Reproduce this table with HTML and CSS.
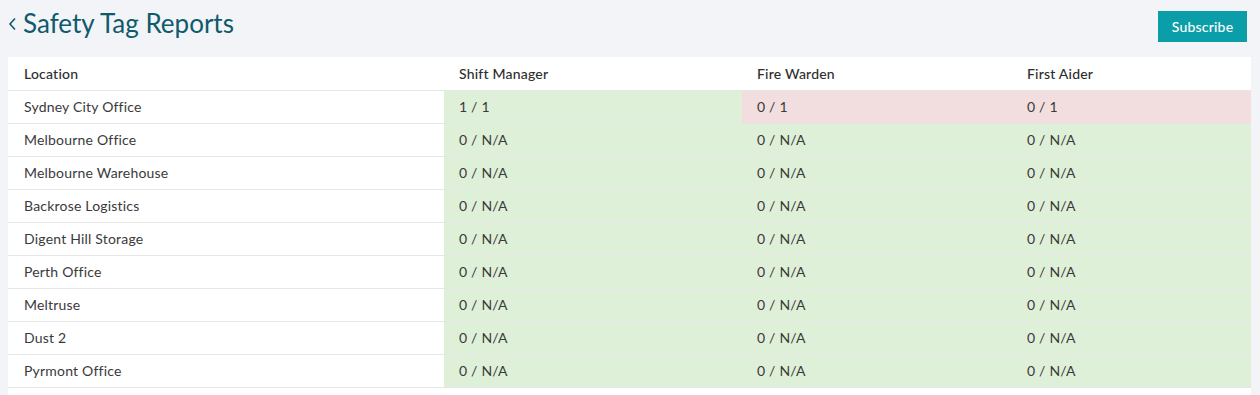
FILE: index.html
```html
<!DOCTYPE html>
<html lang="en">
<head>
<meta charset="utf-8">
<title>Safety Tag Reports</title>
<link rel="stylesheet" href="styles.css">
</head>
<body>
<div class="page">
  <header class="topbar">
    <h1 class="title"><svg class="back" width="10" height="14" viewBox="0 0 10 14" aria-hidden="true"><polyline points="7,1.5 2,7 7,12.5" fill="none" stroke="currentColor" stroke-width="1.6"/></svg>Safety Tag Reports</h1>
    <button class="btn-subscribe" type="button">Subscribe</button>
  </header>
  <section class="panel">
    <div class="grid">
      <div class="row head">
        <div class="cell loc">Location</div>
        <div class="cell">Shift Manager</div>
        <div class="cell">Fire Warden</div>
        <div class="cell">First Aider</div>
      </div>
      <div class="row">
        <div class="cell loc">Sydney City Office</div>
        <div class="cell ok">1 / 1</div>
        <div class="cell bad">0 / 1</div>
        <div class="cell bad">0 / 1</div>
      </div>
      <div class="row">
        <div class="cell loc">Melbourne Office</div>
        <div class="cell ok">0 / N/A</div>
        <div class="cell ok">0 / N/A</div>
        <div class="cell ok">0 / N/A</div>
      </div>
      <div class="row">
        <div class="cell loc">Melbourne Warehouse</div>
        <div class="cell ok">0 / N/A</div>
        <div class="cell ok">0 / N/A</div>
        <div class="cell ok">0 / N/A</div>
      </div>
      <div class="row">
        <div class="cell loc">Backrose Logistics</div>
        <div class="cell ok">0 / N/A</div>
        <div class="cell ok">0 / N/A</div>
        <div class="cell ok">0 / N/A</div>
      </div>
      <div class="row">
        <div class="cell loc">Digent Hill Storage</div>
        <div class="cell ok">0 / N/A</div>
        <div class="cell ok">0 / N/A</div>
        <div class="cell ok">0 / N/A</div>
      </div>
      <div class="row">
        <div class="cell loc">Perth Office</div>
        <div class="cell ok">0 / N/A</div>
        <div class="cell ok">0 / N/A</div>
        <div class="cell ok">0 / N/A</div>
      </div>
      <div class="row">
        <div class="cell loc">Meltruse</div>
        <div class="cell ok">0 / N/A</div>
        <div class="cell ok">0 / N/A</div>
        <div class="cell ok">0 / N/A</div>
      </div>
      <div class="row">
        <div class="cell loc">Dust 2</div>
        <div class="cell ok">0 / N/A</div>
        <div class="cell ok">0 / N/A</div>
        <div class="cell ok">0 / N/A</div>
      </div>
      <div class="row">
        <div class="cell loc">Pyrmont Office</div>
        <div class="cell ok">0 / N/A</div>
        <div class="cell ok">0 / N/A</div>
        <div class="cell ok">0 / N/A</div>
      </div>
    </div>
  </section>
</div>
</body>
</html>
```
FILE: styles.css
```css
html, body {
  margin: 0;
  padding: 0;
  background: #f3f4f8;
}
body {
  font-family: Lato, "Open Sans", "Liberation Sans", sans-serif;
  color: #3a3a3a;
  font-size: 14px;
  letter-spacing: 0.2px;
}
.page {
  padding: 0 8px 0 8px;
}
.topbar {
  display: flex;
  align-items: flex-start;
  justify-content: space-between;
  height: 57px;
}
.title {
  margin: 0;
  padding-top: 7px;
  font-weight: 400;
  font-size: 26px;
  line-height: 32px;
  letter-spacing: 0;
  color: #0f5a6c;
  display: flex;
  align-items: center;
}
.back {
  display: block;
  margin-left: 0;
  margin-right: 5px;
  margin-top: 1px;
}
.btn-subscribe {
  margin-top: 11px;
  margin-right: 5px;
  width: 89px;
  height: 31px;
  border: none;
  background: #0b9ea8;
  color: #fff;
  font-family: inherit;
  font-size: 14px;
  font-weight: 500;
  letter-spacing: 0.2px;
  padding: 0;
  cursor: pointer;
}
.panel {
  background: #fff;
  margin-right: 1px;
  padding-bottom: 8px;
}
.row {
  display: grid;
  grid-template-columns: 436px 298px 270px 1fr;
  border-bottom: 1px solid #e6e6e6;
  height: 32px;
}
.row.head {
  height: 33px;
}
.cell {
  display: flex;
  align-items: center;
  padding: 0 15px 1px;
  white-space: nowrap;
}
.cell.loc {
  padding-left: 16px;
}
.head .cell {
  font-weight: 500;
  color: #2e2e2e;
}
.ok {
  background: #dff0d8;
}
.bad {
  background: #f2dede;
}
```
